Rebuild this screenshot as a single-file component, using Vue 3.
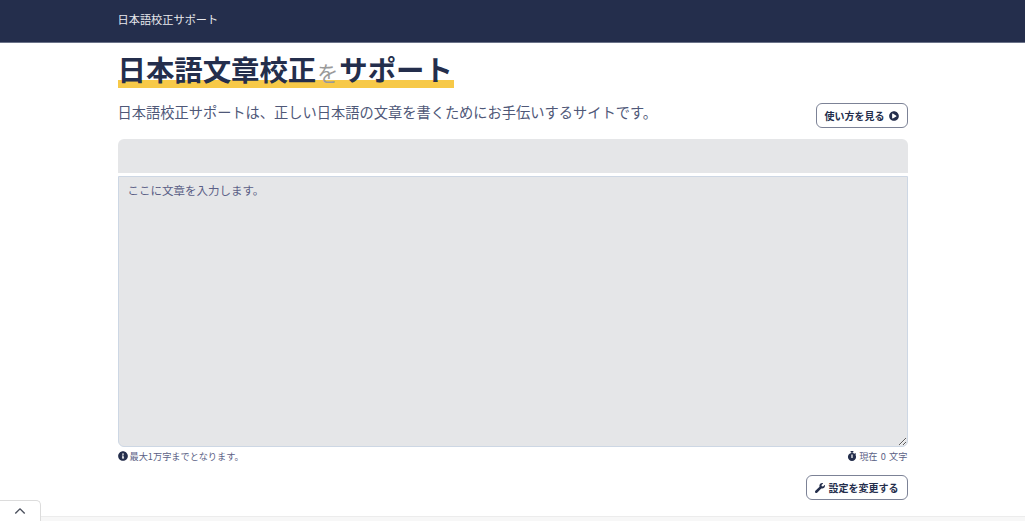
<template>
  <div class="page">
    <header class="navbar">
      <div class="container">
        <a class="brand">日本語校正サポート</a>
      </div>
    </header>

    <main class="container">
      <h1 class="title">
        <span class="marker">日本語文章校正<small>を</small>サポート</span>
      </h1>

      <div class="lead-row">
        <p class="lead">日本語校正サポートは、正しい日本語の文章を書くためにお手伝いするサイトです。</p>
        <button class="btn" type="button">
          使い方を見る
          <svg class="icon" viewBox="0 0 512 512"><path :d="icons.play" /></svg>
        </button>
      </div>

      <div class="toolbar"></div>
      <textarea class="editor" placeholder="ここに文章を入力します。"></textarea>

      <div class="notes">
        <span class="note">
          <svg class="icon" viewBox="0 0 512 512"><path :d="icons.info" /></svg>
          最大1万字までとなります。
        </span>
        <span class="note count">
          <svg class="icon" viewBox="0 0 448 512"><path :d="icons.stopwatch" /></svg>
          現在 0 文字
        </span>
      </div>

      <div class="actions">
        <button class="btn" type="button">
          <svg class="icon" viewBox="0 0 512 512"><path :d="icons.wrench" /></svg>
          設定を変更する
        </button>
      </div>
    </main>

    <footer class="footer">
      <div class="footer-tab">
        <svg viewBox="0 0 14 9" width="12" height="8">
          <path d="M1.5 7.5 7 2l5.5 5.5" fill="none" stroke="#4a4f5c" stroke-width="1.6" />
        </svg>
      </div>
    </footer>
  </div>
</template>

<script setup>
const icons = {
  play: "M256 8C119 8 8 119 8 256s111 248 248 248 248-111 248-248S393 8 256 8zm115.7 272l-176 101c-15.8 8.8-35.7-2.5-35.7-21V152c0-18.4 19.8-29.8 35.7-21l176 107c16.4 9.2 16.4 32.9 0 42z",
  info: "M256 8C119.043 8 8 119.083 8 256c0 136.997 111.043 248 248 248s248-111.003 248-248C504 119.083 392.957 8 256 8zm0 110c23.196 0 42 18.804 42 42s-18.804 42-42 42-42-18.804-42-42 18.804-42 42-42zm56 254c0 6.627-5.373 12-12 12h-88c-6.627 0-12-5.373-12-12v-24c0-6.627 5.373-12 12-12h12v-64h-12c-6.627 0-12-5.373-12-12v-24c0-6.627 5.373-12 12-12h64c6.627 0 12 5.373 12 12v100h12c6.627 0 12 5.373 12 12v24z",
  stopwatch: "M432 304c0 114.9-93.1 208-208 208S16 418.9 16 304c0-104 76.3-190.2 176-205.5V64h-28c-6.6 0-12-5.4-12-12V12c0-6.6 5.4-12 12-12h120c6.6 0 12 5.4 12 12v40c0 6.6-5.4 12-12 12h-28v34.5c37.5 5.8 71.7 21.6 99.7 44.6l27.5-27.5c4.7-4.7 12.3-4.7 17 0l28.3 28.3c4.7 4.7 4.7 12.3 0 17l-29.4 29.4-.6.6C419.7 223.3 432 262.2 432 304zm-176 36V188.5c0-6.6-5.4-12-12-12h-40c-6.6 0-12 5.4-12 12V340c0 6.6 5.4 12 12 12h40c6.6 0 12-5.4 12-12z",
  wrench: "M507.73 109.1c-2.24-9.03-13.54-12.09-20.12-5.51l-74.36 74.36-67.88-11.31-11.31-67.88 74.36-74.36c6.62-6.62 3.43-17.9-5.66-20.16-47.38-11.74-99.55.91-136.58 37.93-39.64 39.64-50.55 97.1-34.05 147.2L18.74 402.76c-24.99 24.99-24.99 65.51 0 90.5 24.99 24.99 65.51 24.99 90.5 0l213.21-213.21c50.12 16.71 107.47 5.68 147.37-34.22 37.07-37.07 49.7-89.32 37.91-136.73z",
};
</script>

<style>
html,
body {
  margin: 0;
  background: #fff;
  overflow: hidden;
}
</style>

<style scoped>
.page {
  height: 521px;
  overflow: hidden;
  font-family: "Noto Sans CJK JP", "Noto Sans", sans-serif;
  color: #242e4c;
}
.container {
  width: 790px;
  margin: 0 auto;
}
.navbar {
  height: 42px;
  background: #242e4c;
  border-bottom: 1px solid #6b7389;
}
.brand {
  color: #e8e9ed;
  font-size: 11.2px;
  line-height: 39px;
  display: block;
}
.title {
  margin: 7px 0 0;
  height: 38px;
  font-size: 28.4px;
  line-height: 37px;
  font-weight: 700;
}
.marker {
  display: inline-block;
  height: 38px;
  padding-right: 1px;
  background: linear-gradient(#f7c948, #f7c948) left bottom / 100% 8px no-repeat;
}
.marker small {
  font-size: 21px;
  font-weight: 400;
  color: #9a9a9a;
  margin: 0 1px;
}
.lead-row {
  display: flex;
  justify-content: space-between;
  align-items: flex-start;
  margin-top: 14px;
}
.lead {
  margin: -1px 0 0;
  font-size: 14.24px;
  line-height: 21px;
  color: #4f5878;
}
.btn {
  display: inline-flex;
  align-items: center;
  gap: 4px;
  height: 25px;
  margin: 0;
  padding: 0 8px;
  background: #fff;
  border: 1px solid #7c8296;
  border-radius: 6px;
  font-family: inherit;
  font-size: 10px;
  font-weight: 700;
  color: #242e4c;
}
.lead-row .btn {
  margin-top: 1px;
}
.icon {
  width: 10px;
  height: 10px;
  fill: #242e4c;
  flex: none;
}
.toolbar {
  height: 34px;
  margin-top: 11px;
  background: #e5e6e8;
  border-radius: 6px 6px 0 0;
}
.editor {
  display: block;
  box-sizing: border-box;
  width: 100%;
  height: 271px;
  margin-top: 3px;
  padding: 5px 9px;
  background: #e5e6e8;
  border: 1px solid #cdd7e4;
  border-radius: 0 0 6px 6px;
  font-family: inherit;
  font-size: 11.5px;
  line-height: 17px;
  color: #242e4c;
  outline: none;
}
.editor::placeholder {
  color: #5b5f86;
  opacity: 1;
}
.notes {
  display: flex;
  justify-content: space-between;
  margin-top: 2px;
  height: 14px;
}
.note {
  display: inline-flex;
  align-items: center;
  gap: 2px;
  font-size: 9.2px;
  line-height: 14px;
  color: #5b5f86;
}
.count {
  word-spacing: 1.2px;
}
.actions {
  display: flex;
  justify-content: flex-end;
  margin-top: 12px;
}
.footer {
  position: relative;
  margin-top: 16px;
  height: 4px;
  background: #f7f7f7;
  border-top: 1px solid #ececec;
}
.footer-tab {
  position: absolute;
  left: 0;
  bottom: 0;
  width: 41px;
  height: 21px;
  box-sizing: border-box;
  background: #fff;
  border: 1px solid #dcdcdc;
  border-bottom: none;
  border-left: none;
  border-radius: 0 5px 0 0;
  display: flex;
  align-items: center;
  justify-content: center;
}
</style>
